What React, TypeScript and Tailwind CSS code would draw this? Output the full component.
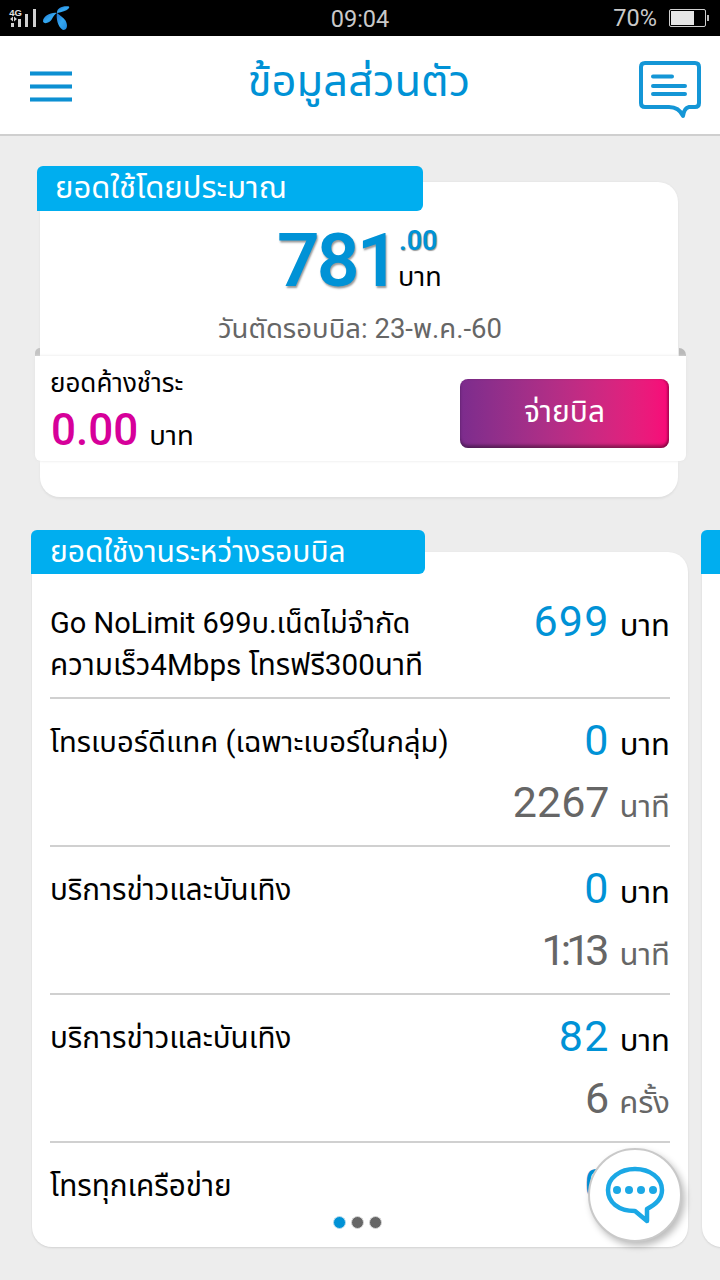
import React from "react";

type LineProps = { className: string; children: React.ReactNode };

function Line({ className, children }: LineProps) {
  return <span className={`block whitespace-pre ${className}`}>{children}</span>;
}

function StatusBar() {
  return (
    <header className="flex h-9 shrink-0 items-center bg-black text-[#c9c9c9]">
      <div className="grid w-full grid-cols-3 items-center">
        <svg width="80" height="36" viewBox="0 0 80 36" className="block">
          <g fill="#d0d0d0">
            <rect x="11" y="23" width="3" height="4" />
            <rect x="18" y="19" width="3" height="8" />
            <rect x="25" y="14" width="3" height="13" />
            <rect x="33" y="9" width="3" height="18" />
            <path d="M10 19l3-2.5v5zM17 19l-3-2.5v5z" />
          </g>
          <text x="9.3" y="16" fontSize="9.5" fontWeight="700" fontFamily="Liberation Sans" fill="#e0e0e0">4G</text>
          <defs>
            <linearGradient id="leaf" x1="0" y1="0" x2="1" y2="1">
              <stop offset="0" stopColor="#1b6fd0" />
              <stop offset=".5" stopColor="#35a8f0" />
              <stop offset="1" stopColor="#1c86dd" />
            </linearGradient>
          </defs>
          <g fill="url(#leaf)">
            <path d="M57 13C56.500 8 63 5.500 69 6.500C70.500 9 64.500 11.500 57 13Z" />
            <path d="M57 13C51 12 43 16 43 21.500C44.500 25 50 22.500 52 19C53 16.500 55 14 57 13Z" />
            <path d="M57 13C56 18 57.500 27 63 30C67.500 30 68 25 65.500 20.500C63 17 60 15.500 57 13Z" />
          </g>
        </svg>
        <Line className="pt-0.5 text-center text-[23.5px] leading-9">09:04</Line>
        <div className="flex items-center justify-end pr-[11px]">
          <Line className="mr-3 text-[23.5px] leading-9">70%</Line>
          <div className="flex h-[18px] w-[37px] rounded-[2px] border border-[#d0d0d0] p-px">
            <div className="w-[23px] bg-[#e6e6e6]" />
          </div>
          <div className="ml-px h-1.5 w-0.5 bg-[#bdbdbd]" />
        </div>
      </div>
    </header>
  );
}

function TopBar() {
  return (
    <nav className="flex h-[100px] shrink-0 items-start justify-between border-b-2 border-[#cfcfcf] bg-white">
      <div className="mt-[35px] ml-[30px] flex w-[42px] flex-col gap-2">
        <i className="h-[5px] border-y border-[#7cc3e8] bg-[#0c90d2]" />
        <i className="h-[5px] border-y border-[#7cc3e8] bg-[#0c90d2]" />
        <i className="h-[5px] border-y border-[#7cc3e8] bg-[#0c90d2]" />
      </div>
      <Line className="mt-5 ml-[10px] text-[43.5px] leading-[52px] text-[#0092d6]">ข้อมูลส่วนตัว</Line>
      <svg width="66" height="62" viewBox="636 58 66 62" className="mt-[22px] mr-[18px]" fill="none" stroke="#1496d6" strokeWidth="4" strokeLinecap="round" strokeLinejoin="round">
        <path d="M645 63H695Q699 63 699 67V103Q699 107 695 107H689Q684 108 683 116Q679 107 669 107H645Q641 107 641 103V67Q641 63 645 63Z" />
        <path d="M653 76.500H672M653 86H685M653 94H685" />
      </svg>
    </nav>
  );
}

function BillCard() {
  return (
    <section className="mt-[30px] ml-[35px] flex h-[331px] w-[651px] shrink-0 flex-col">
      <div className="z-10 ml-0.5 h-[45px] w-[386px] rounded-[6px] rounded-bl-none bg-[#00aeef] pl-[18px]">
        <Line className="text-[31px] leading-[44px] text-white">ยอดใช้โดยประมาณ</Line>
      </div>
      <div className="ml-[5px] -mt-[29px] h-[174px] w-[638px] rounded-t-[20px] bg-white pt-[45px] shadow-[0_0_2px_#dedede]">
        <div className="flex h-[70px] pl-[237px]">
          <Line className="w-[122px] text-[75px] leading-[66px] font-semibold tracking-[-3px] text-[#0092d6] [text-shadow:1px_2px_2px_#999]">781</Line>
          <div>
            <Line className="text-[27px] leading-[29px] font-semibold text-[#0092d6] [text-shadow:1px_1px_1px_#999]">.00</Line>
            <Line className="-ml-px text-[27px] leading-[42px] text-black">บาท</Line>
          </div>
        </div>
        <Line className="mt-[14px] ml-0.5 text-center text-[27.5px] leading-9 text-[#666]">วันตัดรอบบิล: 23-พ.ค.-60</Line>
      </div>
      <div className="z-10 -mt-2 flex h-2 shrink-0 justify-between">
        <i className="h-2 w-[5px] rounded-tl-full bg-[#c4c4c4]" />
        <i className="h-2 w-[7px] rounded-tr-full bg-[#b9b9b9]" />
      </div>
      <div className="z-10 flex h-[105px] shrink-0 justify-between rounded-b-[6px] bg-white pr-4 pl-[15px] shadow-[0_0_3px_#e3e3e3]">
        <div>
          <Line className="mt-[9px] text-[26px] leading-9 text-black">ยอดค้างชำระ</Line>
          <div className="mt-px ml-px flex items-baseline gap-[11px]">
            <Line className="text-[44px] leading-[56px] font-medium text-[#d6009a]">0.00</Line>
            <Line className="text-[27.5px] leading-[56px] text-black">บาท</Line>
          </div>
        </div>
        <button className="mt-[23px] mr-px h-[69px] w-[209px] rounded-[8px] bg-linear-to-r from-[#7c2c8d] to-[#f90878] text-center shadow-[inset_0_-3px_3px_#0005,inset_-2px_0_2px_#0003]">
          <Line className="-mt-1 text-[30px] leading-[64px] text-white">จ่ายบิล</Line>
        </button>
      </div>
      <div className="ml-[5px] h-[36px] w-[638px] rounded-b-[20px] bg-white shadow-[0_2px_2px_#e0e0e0]" />
    </section>
  );
}

type Usage = { name: string[]; size: string; amount: string; used?: string; unit?: string };

const usages: Usage[] = [
  { name: ["Go NoLimit 699บ.เน็ตไม่จำกัด", "ความเร็ว4Mbps โทรฟรี300นาที"], size: "text-[29.6px]", amount: "699" },
  { name: ["โทรเบอร์ดีแทค (เฉพาะเบอร์ในกลุ่ม)"], size: "text-[29.2px]", amount: "0", used: "2267", unit: "นาที" },
  { name: ["บริการข่าวและบันเทิง"], size: "text-[29.6px]", amount: "0", used: "1:13", unit: "นาที" },
  { name: ["บริการข่าวและบันเทิง"], size: "text-[29.6px]", amount: "82", used: "6", unit: "ครั้ง" },
  { name: ["โทรทุกเครือข่าย"], size: "text-[29.7px]", amount: "0" },
];

function UsageRow({ item, first, last }: { item: Usage; first: boolean; last: boolean }) {
  return (
    <div className={`flex shrink-0 justify-between ${first ? "h-[125px] pt-[28px]" : "h-[148px] pt-[22px]"} ${last ? "" : "border-b-2 border-[#d0d0d0]"}`}>
      <div>
        {item.name.map((n, i) => (
          <Line key={n} className={`leading-[42px] text-black ${first && i === 0 ? "text-[29px]" : item.size}`}>{n}</Line>
        ))}
      </div>
      <div className="flex flex-col items-end">
        <div className="-mt-[5px] flex items-baseline gap-[10px]">
          <Line className="text-[43px] leading-[48px] tracking-[1.3px] text-[#0092d6]">{item.amount}</Line>
          <Line className="text-[31px] leading-[48px] text-black">บาท</Line>
        </div>
        {item.used && (
          <div className="mt-[9px] flex items-baseline gap-[10px] text-[#666]">
            <Line className={`text-[43px] leading-[48px] ${item.used.includes(":") ? "mr-[5px] tracking-[-5px]" : ""}`}>{item.used}</Line>
            <Line className="text-[31px] leading-[48px]">{item.unit}</Line>
          </div>
        )}
      </div>
    </div>
  );
}

function UsageCarousel() {
  return (
    <section className="mt-[33px] ml-[31px] flex w-[689px] shrink-0 gap-[13px] overflow-hidden pb-8">
      <article className="flex w-[657px] shrink-0 flex-col">
        <div className="z-10 h-[44px] w-[394px] shrink-0 rounded-[6px] rounded-bl-none bg-[#00aeef] pl-[19px]">
          <Line className="text-[30px] leading-[44px] text-white">ยอดใช้งานระหว่างรอบบิล</Line>
        </div>
        <div className="-mt-[22px] ml-px flex h-[695px] w-[656px] shrink-0 flex-col rounded-[20px] rounded-tl-none bg-white px-[18px] pt-[22px] shadow-[0_1px_2px_#d2d2d2]">
          {usages.map((u, i) => (
            <UsageRow key={i} item={u} first={i === 0} last={i === usages.length - 1} />
          ))}
          <div className="z-10 -mt-[75px] ml-[283px] flex gap-[5px]">
            <i className="size-[13px] rounded-full border border-[#b8dced] bg-[#0092d6]" />
            <i className="size-[13px] rounded-full border border-[#d8d8d8] bg-[#666]" />
            <i className="size-[13px] rounded-full border border-[#d8d8d8] bg-[#666]" />
          </div>
        </div>
      </article>
      <article className="flex w-[657px] shrink-0 flex-col">
        <div className="z-10 h-[44px] w-[394px] shrink-0 rounded-[6px] rounded-bl-none bg-[#00aeef]" />
        <div className="-mt-[22px] ml-px h-[695px] shrink-0 rounded-[20px] rounded-tl-none bg-white shadow-[0_1px_2px_#d2d2d2]" />
      </article>
    </section>
  );
}

function ChatButton() {
  return (
    <button className="absolute top-[1148px] left-[588px] z-20 size-[94px] rounded-full border-2 border-[#c9c9c9] bg-white shadow-[3px_4px_7px_#0004]">
      <svg width="90" height="90" viewBox="590 1150 90 90" fill="none" stroke="#1ba8e5" strokeWidth="4.500" strokeLinejoin="round">
        <path d="M635 1169C650 1169 662 1178 662 1190C662 1199 656 1204 647 1209V1221L635 1211C618 1211 608 1202 608 1190C608 1178 620 1169 635 1169Z" />
        <g fill="#1ba8e5" stroke="none">
          <circle cx="617" cy="1190" r="4" />
          <circle cx="629" cy="1190" r="4" />
          <circle cx="641" cy="1190" r="4" />
          <circle cx="653" cy="1190" r="4" />
        </g>
      </svg>
    </button>
  );
}

export default function App() {
  return (
    <main className="relative flex h-[1280px] w-[720px] flex-col overflow-hidden bg-[#ededed] font-[Roboto,'Noto_Sans_Thai','Noto_Sans',sans-serif]">
      <StatusBar />
      <TopBar />
      <BillCard />
      <UsageCarousel />
      <ChatButton />
    </main>
  );
}
